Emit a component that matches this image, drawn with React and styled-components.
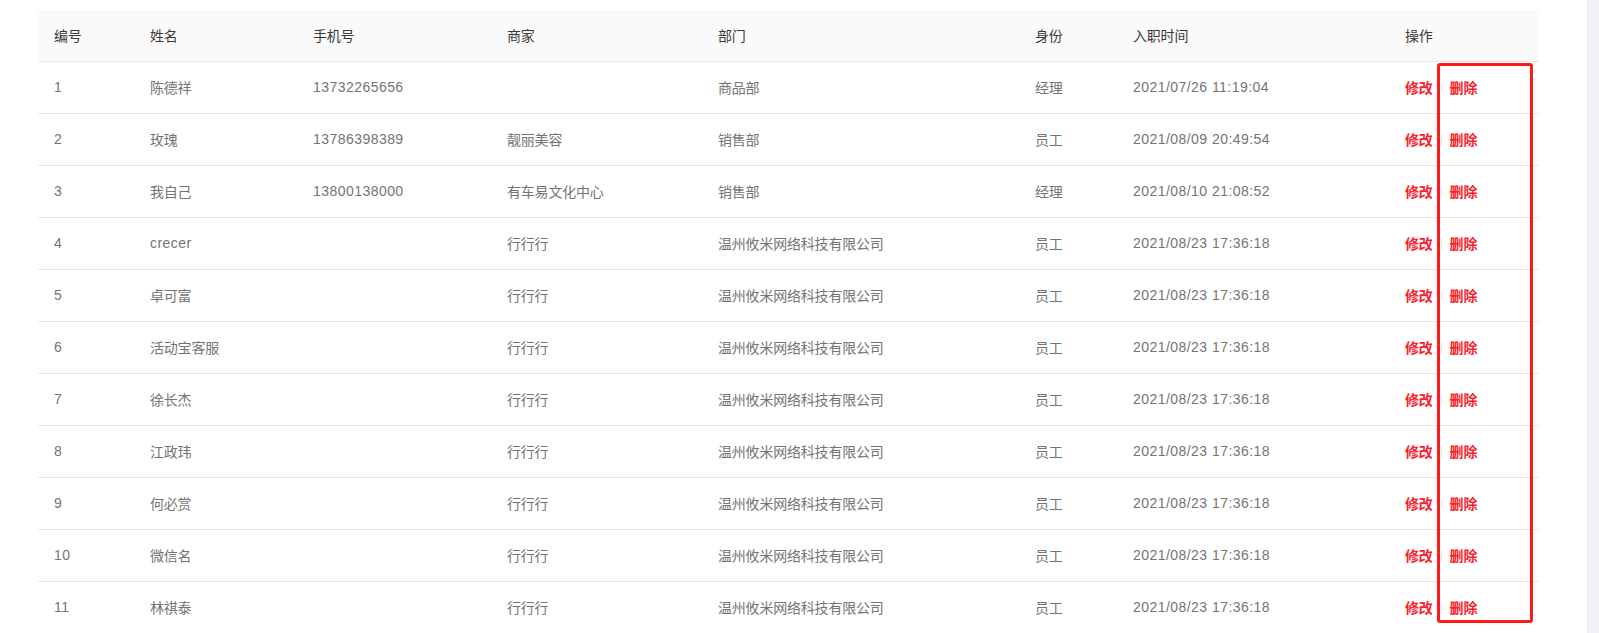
import React from "react";
import styled, { createGlobalStyle } from "styled-components";

const GlobalStyle = createGlobalStyle`
  html, body {
    margin: 0;
    padding: 0;
    height: 633px;
    overflow: hidden;
    background: #ffffff;
    font-family: "Liberation Sans", "Noto Sans CJK SC", sans-serif;
  }
`;

const Page = styled.div`
  display: flex;
  height: 633px;
  overflow: hidden;
`;

const Main = styled.div`
  flex: 1;
  padding: 10px 48px 0 38px;
  position: relative;
`;

const SideStrip = styled.div`
  width: 12px;
  background: #f0f2f5;
  border-left: 1px solid #e8eaf0;
`;

const TableWrap = styled.div`
  position: relative;
`;

const Table = styled.table`
  width: 100%;
  border-collapse: separate;
  border-spacing: 0;
  table-layout: fixed;
  font-size: 14px;
  letter-spacing: -0.2px;
`;

const HeadCell = styled.th`
  height: 52px;
  padding: 0 16px 2px;
  box-sizing: border-box;
  text-align: left;
  font-weight: 400;
  color: #3a3a3a;
  background: #fafafa;
  border-bottom: 1px solid #e8e8e8;
  &:first-child { border-top-left-radius: 4px; }
  &:last-child { border-top-right-radius: 4px; }
`;

const Cell = styled.td`
  height: 52px;
  padding: 0 16px 2px;
  box-sizing: border-box;
  color: #747474;
  border-bottom: 1px solid #e8e8e8;
  white-space: nowrap;
`;

const Latin = styled.span`
  letter-spacing: 0.45px;
`;

const ActionLink = styled.span`
  color: #f5222d;
  font-weight: 700;
  letter-spacing: -0.2px;
  cursor: pointer;
`;

const Divider = styled.span`
  display: inline-block;
  width: 1px;
  height: 0.9em;
  margin: 0 8px;
  background: #e8e8e8;
  vertical-align: middle;
  position: relative;
  top: -1px;
`;

const Highlight = styled.div`
  position: absolute;
  left: 1399px;
  top: 53px;
  width: 90px;
  height: 554px;
  border: 3px solid #ff1a1a;
  border-radius: 3px;
  pointer-events: none;
`;

const cols = [96, 163, 194, 211, 317, 98, 272, 150];

const company = "温州攸米网络科技有限公司";
const t4 = "2021/08/23 17:36:18";

const rows = [
  ["1", "陈德祥", "13732265656", "", "商品部", "经理", "2021/07/26 11:19:04"],
  ["2", "玫瑰", "13786398389", "靓丽美容", "销售部", "员工", "2021/08/09 20:49:54"],
  ["3", "我自己", "13800138000", "有车易文化中心", "销售部", "经理", "2021/08/10 21:08:52"],
  ["4", "crecer", "", "行行行", company, "员工", t4],
  ["5", "卓可富", "", "行行行", company, "员工", t4],
  ["6", "活动宝客服", "", "行行行", company, "员工", t4],
  ["7", "徐长杰", "", "行行行", company, "员工", t4],
  ["8", "江政玮", "", "行行行", company, "员工", t4],
  ["9", "何必赏", "", "行行行", company, "员工", t4],
  ["10", "微信名", "", "行行行", company, "员工", t4],
  ["11", "林祺泰", "", "行行行", company, "员工", t4],
];

const headers = ["编号", "姓名", "手机号", "商家", "部门", "身份", "入职时间", "操作"];

const isLatin = (s) => /^[\x00-\x7f]+$/.test(s);

export default function App() {
  return (
    <>
      <GlobalStyle />
      <Page>
        <Main>
          <TableWrap>
            <Table>
              <colgroup>
                {cols.map((w, i) => (
                  <col key={i} style={{ width: w }} />
                ))}
              </colgroup>
              <thead>
                <tr>
                  {headers.map((h) => (
                    <HeadCell key={h}>{h}</HeadCell>
                  ))}
                </tr>
              </thead>
              <tbody>
                {rows.map((r) => (
                  <tr key={r[0]}>
                    {r.map((c, i) => (
                      <Cell key={i}>{isLatin(c) ? <Latin>{c}</Latin> : c}</Cell>
                    ))}
                    <Cell>
                      <ActionLink>修改</ActionLink>
                      <Divider />
                      <ActionLink>删除</ActionLink>
                    </Cell>
                  </tr>
                ))}
              </tbody>
            </Table>
            <Highlight />
          </TableWrap>
        </Main>
        <SideStrip />
      </Page>
    </>
  );
}
